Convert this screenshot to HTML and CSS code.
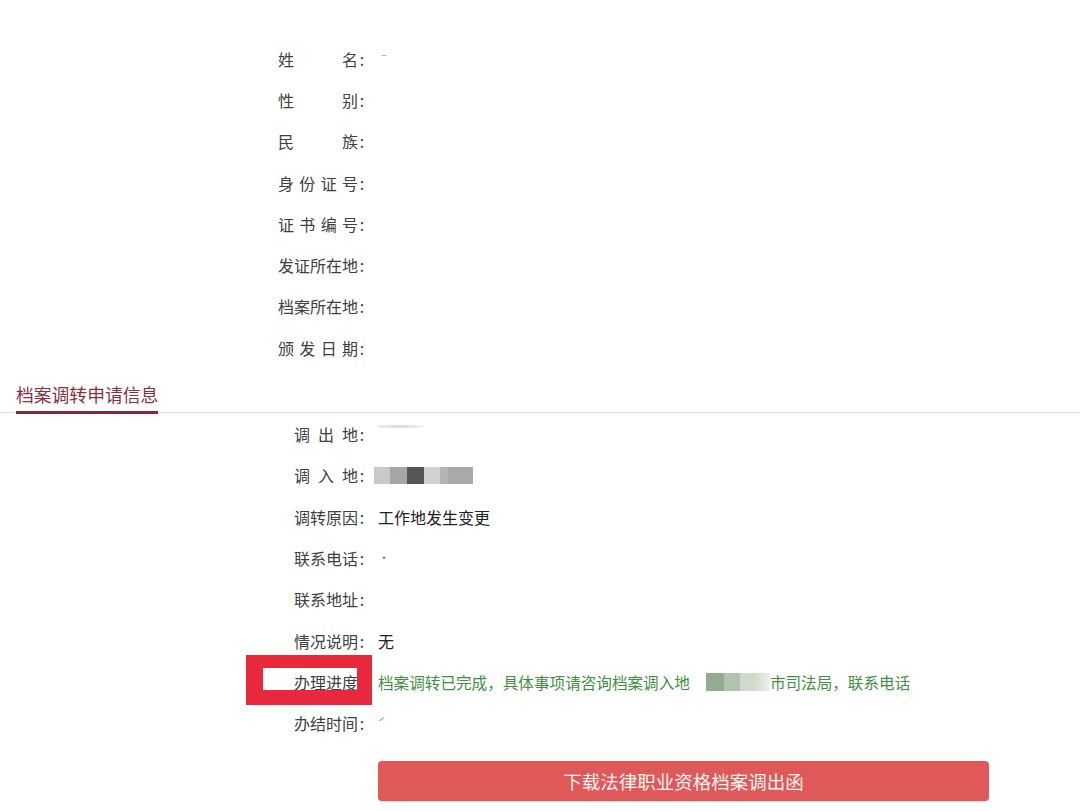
FILE: index.html
```html
<!DOCTYPE html>
<html lang="zh-CN">
<head>
<meta charset="utf-8">
<title>档案调转申请信息</title>
<link rel="stylesheet" href="styles.css">
</head>
<body>
<div class="page">
  <section class="info info-cert">
    <div class="row"><div class="lbl"><span class="txt">姓名</span><span class="colon">:</span></div><div class="val"><span class="mark">ˉ</span></div></div>
    <div class="row"><div class="lbl"><span class="txt">性别</span><span class="colon">:</span></div><div class="val"></div></div>
    <div class="row"><div class="lbl"><span class="txt">民族</span><span class="colon">:</span></div><div class="val"></div></div>
    <div class="row"><div class="lbl"><span class="txt">身份证号</span><span class="colon">:</span></div><div class="val"></div></div>
    <div class="row"><div class="lbl"><span class="txt">证书编号</span><span class="colon">:</span></div><div class="val"></div></div>
    <div class="row"><div class="lbl"><span class="txt">发证所在地</span><span class="colon">:</span></div><div class="val"></div></div>
    <div class="row"><div class="lbl"><span class="txt">档案所在地</span><span class="colon">:</span></div><div class="val"></div></div>
    <div class="row"><div class="lbl"><span class="txt">颁发日期</span><span class="colon">:</span></div><div class="val"></div></div>
  </section>

  <div class="tab-head"><span class="tab-title">档案调转申请信息</span></div>

  <section class="info info-apply">
    <div class="row"><div class="lbl"><span class="txt">调出地</span><span class="colon">:</span></div><div class="val"><span class="smudge"></span></div></div>
    <div class="row"><div class="lbl"><span class="txt">调入地</span><span class="colon">:</span></div><div class="val"><span class="mosaic"><i class="m1"></i><i class="m2"></i><i class="m3"></i><i class="m4"></i><i class="m5"></i><i class="m6"></i></span></div></div>
    <div class="row"><div class="lbl"><span class="txt">调转原因</span><span class="colon">:</span></div><div class="val dark">工作地发生变更</div></div>
    <div class="row"><div class="lbl"><span class="txt">联系电话</span><span class="colon">:</span></div><div class="val"><span class="mark">·</span></div></div>
    <div class="row"><div class="lbl"><span class="txt">联系地址</span><span class="colon">:</span></div><div class="val"></div></div>
    <div class="row"><div class="lbl"><span class="txt">情况说明</span><span class="colon">:</span></div><div class="val dark">无</div></div>
    <div class="row row-progress">
      <div class="lbl"><span class="txt">办理进度</span><span class="colon">:</span></div>
      <div class="val progress">档案调转已完成，具体事项请咨询档案调入地<span class="green-mosaic"></span>市司法局，联系电话</div>
      <span class="highlight"></span>
    </div>
    <div class="row"><div class="lbl"><span class="txt">办结时间</span><span class="colon">:</span></div><div class="val"><span class="mark">ˊ</span></div></div>
  </section>

  <div class="actions">
    <button class="btn-download" type="button">下载法律职业资格档案调出函</button>
  </div>
</div>
</body>
</html>
```

FILE: styles.css
```css
html, body {
  margin: 0;
  padding: 0;
  background: #ffffff;
}

body {
  font-family: "Noto Sans CJK SC", "Noto Sans", sans-serif;
  font-size: 16px;
  color: #3a3a3a;
}

.page {
  width: 1080px;
  min-height: 811px;
}

/* label / value rows */
.info {
  display: flex;
  flex-direction: column;
}

.info-cert {
  padding-top: 38px;
}

.info-apply {
  padding-top: 0;
}

.row {
  display: grid;
  grid-template-columns: 366px 1fr;
  column-gap: 12px;
  height: 41.3px;
  align-items: center;
  position: relative;
}

.lbl {
  display: flex;
  justify-content: flex-end;
  align-items: center;
  line-height: 22px;
  color: #404040;
}

.lbl .txt {
  display: block;
  text-align: justify;
  text-align-last: justify;
  text-justify: inter-character;
}

.info-cert .lbl .txt {
  width: 80px;
}

.info-apply .lbl .txt {
  width: 64px;
}

.lbl .colon {
  display: block;
  width: 8px;
  text-align: center;
}

.val {
  line-height: 22px;
  display: flex;
  align-items: center;
}

.val.dark {
  color: #222222;
}

.mark {
  color: #888888;
  font-size: 12px;
}

/* section tab header */
.tab-head {
  margin-top: 14px;
  padding-left: 16px;
  border-bottom: 1px solid #e2e2e2;
}

.tab-title {
  display: inline-block;
  font-size: 17.8px;
  line-height: 24px;
  color: #8a2f42;
  padding-bottom: 5px;
  border-bottom: 3px solid #8e2438;
  margin-bottom: -2px;
}

/* masked values */
.smudge {
  display: block;
  width: 46px;
  height: 3px;
  margin-top: -16px;
  background: linear-gradient(90deg, #eeeeee, #dcdcdc, #f4f4f4);
  border-radius: 2px;
}

.mosaic {
  display: flex;
  height: 17px;
  margin-left: -4px;
}

.mosaic i {
  display: block;
  height: 17px;
}

.mosaic .m1 { width: 16px; background: #c9c9c9; }
.mosaic .m2 { width: 17px; background: #a6a6a6; }
.mosaic .m3 { width: 17px; background: #565656; }
.mosaic .m4 { width: 16px; background: #d2d2d2; }
.mosaic .m5 { width: 8px;  background: #b4b4b4; }
.mosaic .m6 { width: 25px; background: #a9a9a9; }

.progress {
  color: #3f8f3f;
  font-size: 15.6px;
  white-space: nowrap;
}

.green-mosaic {
  display: inline-block;
  width: 64px;
  height: 18px;
  margin: 0 0 0 16px;
  background: linear-gradient(90deg, #95aa93 0 18px, #b1c2ae 18px 34px, #cfdacd 34px 48px, #eef2ed);
}

/* annotation frame around the progress label */
.highlight {
  position: absolute;
  left: 246px;
  top: -6px;
  width: 94px;
  height: 22px;
  border-style: solid;
  border-color: #e8283c;
  border-width: 13px 15px 15px 17px;
  pointer-events: none;
}

/* download button */
.actions {
  padding: 17px 0 0 378px;
}

.btn-download {
  display: block;
  width: 611px;
  height: 40px;
  border: none;
  border-radius: 4px;
  background: #df5959;
  color: #fff5f3;
  font-family: "Noto Sans CJK SC", "Noto Sans", sans-serif;
  font-size: 18.5px;
  line-height: 40px;
  padding: 0;
  box-shadow: 0 1px 2px rgba(0, 0, 0, 0.15);
}
```
